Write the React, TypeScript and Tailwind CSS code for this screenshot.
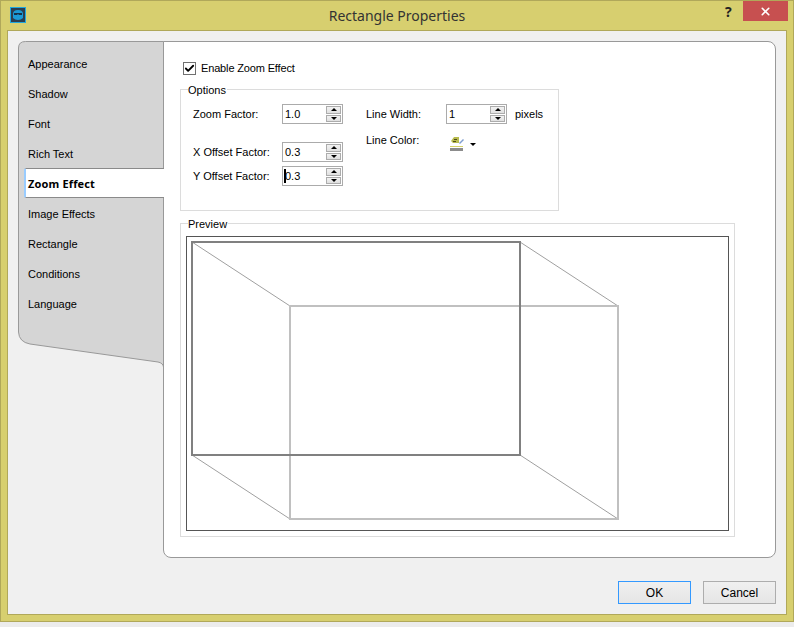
import { Check, X } from "lucide-react"

const tabs = ["Appearance", "Shadow", "Font", "Rich Text", "Zoom Effect", "Image Effects", "Rectangle", "Conditions", "Language"]

const Spinner = ({ value, caret }: { value: string; caret?: boolean }) => (
    <div className="relative flex h-[20px] w-[61px] items-stretch border border-[#ababab] bg-white">
        <div className="flex-1 pl-[2px] text-[11px] leading-[18px]">{value}</div>
        {caret && <div className="absolute left-[1px] top-[2px] h-[14px] w-[2px] bg-black" />}
        <div className="mr-[1px] flex w-[15px] flex-col gap-[1px] py-[1px]">
            <div className="flex flex-1 items-center justify-center border border-[#acacac] bg-gradient-to-b from-[#f2f2f2] to-[#e0e0e0]">
                <div className="h-0 w-0 border-x-[3px] border-b-[3px] border-x-transparent border-b-black" />
            </div>
            <div className="flex flex-1 items-center justify-center border border-[#acacac] bg-gradient-to-b from-[#f2f2f2] to-[#e0e0e0]">
                <div className="h-0 w-0 border-x-[3px] border-t-[3px] border-x-transparent border-t-black" />
            </div>
        </div>
    </div>
)

const SideBar = () => (
    <div className="relative z-10 h-[327px] w-[146px] -mr-[1px] pl-[6px] pt-[7px]">
        <svg className="absolute left-0 top-0" width="146" height="327" viewBox="0 0 146 327">
            <path d="M.5 7Q.5.5 7.5.5H145.5V326Q145 322 140 321L12 303Q1 301 .5 291Z" fill="#d5d5d5" stroke="#999999" />
        </svg>
        {tabs.map((tab) =>
            tab === "Zoom Effect" ? (
                <div key={tab} className="relative flex h-[30px] items-center rounded-l-[2px] border-y border-l-2 border-y-[#8a8a8a] border-l-[#99ccff] bg-white pl-[2px] pt-[2px] font-['Noto_Sans',sans-serif] text-[11px] font-bold tracking-[0.15px]">
                    {tab}
                </div>
            ) : (
                <div key={tab} className="relative flex h-[30px] items-center pl-[4px] pt-[2px] text-[11px]">
                    {tab}
                </div>
            )
        )}
    </div>
)

const Preview = () => (
    <svg width="543" height="295" viewBox="0 0 543 295" className="block" fill="none">
        <rect x="0.5" y="0.5" width="542" height="294" stroke="#555555" />
        <path d="M6 6L104 70M334 6L432 70M6 219L104 283M334 219L432 283" stroke="#a0a0a0" />
        <rect x="104" y="70" width="328" height="213" stroke="#c0c0c0" strokeWidth="2" />
        <rect x="6" y="6" width="328" height="213" stroke="#808080" strokeWidth="2" />
    </svg>
)

const LineColorIcon = () => (
    <svg width="16" height="18" viewBox="0 0 16 18">
        <path d="M5 2h5v6H4L2 6z" fill="#b8bb4e" />
        <path d="M5 4h3v1H5zM4 6h3v1H4z" fill="#4d4a1e" />
        <path d="M10 8l4-4 1 1-4 4z" fill="#7f9ed0" />
        <path d="M1 11h13v1H1z" fill="#d6d36a" />
        <path d="M1 13h13v3H1z" fill="#8c8c8c" />
    </svg>
)

export default function App() {
    return (
        <div className="h-[627px] w-[794px] bg-[#ececec] font-['Liberation_Sans',sans-serif] text-black">
            <div className="flex h-[622px] flex-col border border-[#b0a85a] bg-[#d7cf6f]">
                <div className="relative flex h-[29px] shrink-0 items-center justify-center">
                    <div className="absolute left-[9px] top-[6px] flex h-[16px] w-[16px] items-center justify-center border border-[#1ea7e0] bg-[#2c3e50]">
                        <svg width="12" height="12" viewBox="0 0 12 12">
                            <path d="M1 5Q1 1 6 1T11 5V9Q9 11 6 11T1 9Z" fill="#1b9ad6" />
                            <path d="M2 4H10V6H7L6 5 5 6H2Z" fill="#17324a" />
                        </svg>
                    </div>
                    <span className="font-['Noto_Sans',sans-serif] text-[14px] text-[#333333]">Rectangle Properties</span>
                    <span className="absolute left-[724px] top-[3px] font-['Noto_Sans',sans-serif] text-[14px] font-bold leading-[16px] text-[#222222]">?</span>
                    <div className="absolute right-[5px] top-0 flex h-[20px] w-[45px] items-center justify-center bg-[#c75050]">
                        <X size={13} strokeWidth={3} color="white" />
                    </div>
                </div>
                <div className="mx-[6px] flex h-[585px] flex-col border border-[#b0a85a] bg-[#f0f0f0]">
                    <div className="flex px-[10px] pt-[10px]">
                        <SideBar />
                        <div className="h-[517px] flex-1 rounded-[8px] rounded-tl-none rounded-bl-[8px] border border-[#999999] bg-white pl-[16px] pt-[19px]">
                            <label className="flex h-[14px] items-center pl-[3px] text-[11px]">
                                <span className="flex h-[13px] w-[13px] items-center justify-center border border-[#707070] bg-white">
                                    <Check size={11} strokeWidth={4} />
                                </span>
                                <span className="ml-[5px] tracking-[-0.15px]">Enable Zoom Effect</span>
                            </label>
                            <fieldset className="mt-[7px] h-[129px] w-[379px] border border-[#dcdcdc] text-[11px]">
                                <legend className="ml-[7px] pr-[1px] pt-[1px] leading-[14px]">Options</legend>
                                <div className="ml-[12px] mt-[7px] flex">
                                    <div className="flex w-[150px] flex-col">
                                        <div className="flex h-[20px] items-center justify-between">
                                            <span>Zoom Factor:</span>
                                            <Spinner value="1.0" />
                                        </div>
                                        <div className="mt-[18px] flex h-[20px] items-center justify-between">
                                            <span>X Offset Factor:</span>
                                            <Spinner value="0.3" />
                                        </div>
                                        <div className="mt-[4px] flex h-[20px] items-center justify-between">
                                            <span>Y Offset Factor:</span>
                                            <Spinner value="0.3" caret />
                                        </div>
                                    </div>
                                    <div className="ml-[23px] flex flex-col">
                                        <div className="flex h-[20px] items-center">
                                            <span className="w-[80px]">Line Width:</span>
                                            <Spinner value="1" />
                                            <span className="ml-[8px]">pixels</span>
                                        </div>
                                        <div className="mt-[5px] flex h-[20px] items-center">
                                            <span className="w-[83px] pt-[2px]">Line Color:</span>
                                            <div className="mt-[10px]">
                                                <LineColorIcon />
                                            </div>
                                            <div className="ml-[5px] mt-[10px] h-0 w-0 border-x-[3px] border-t-[3px] border-x-transparent border-t-black" />
                                        </div>
                                    </div>
                                </div>
                            </fieldset>
                            <fieldset className="mt-[5px] h-[321px] w-[555px] border border-[#dcdcdc] text-[11px]">
                                <legend className="ml-[7px] pr-[1px] pt-[1px] leading-[14px]">Preview</legend>
                                <div className="ml-[5px] mt-[5px]">
                                    <Preview />
                                </div>
                            </fieldset>
                        </div>
                    </div>
                    <div className="mt-[23px] flex justify-end gap-[12px] pr-[10px]">
                        <button className="h-[23px] w-[73px] border border-[#3399ff] bg-gradient-to-b from-[#f0f0f0] to-[#e5e5e5] text-[12px]">OK</button>
                        <button className="h-[23px] w-[73px] border border-[#adadad] bg-gradient-to-b from-[#f0f0f0] to-[#e5e5e5] text-[12px]">Cancel</button>
                    </div>
                </div>
            </div>
        </div>
    )
}
